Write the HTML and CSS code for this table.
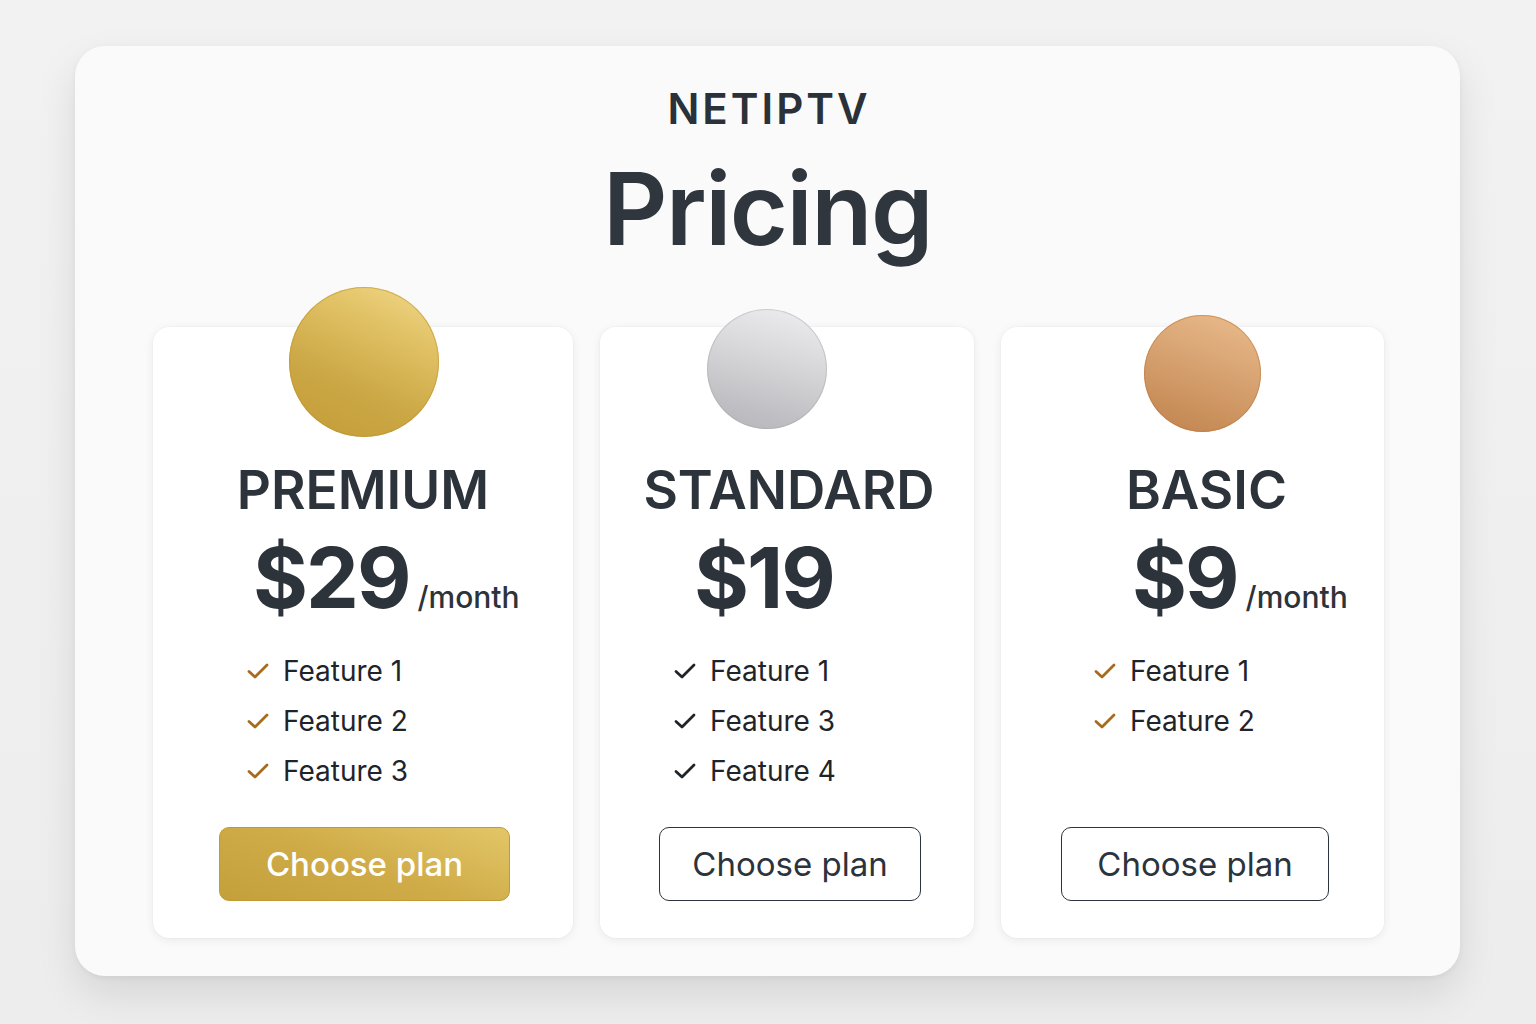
FILE: index.html
```html
<!DOCTYPE html>
<html lang="en">
<head>
<meta charset="utf-8">
<title>NETIPTV Pricing</title>
<link rel="stylesheet" href="styles.css">
</head>
<body>
<main class="panel">
  <header class="head">
    <div class="brand">NETIPTV</div>
    <h1 class="title">Pricing</h1>
  </header>
  <section class="plans">
    <article class="card card--gold">
      <div class="medal-area"><div class="medal"></div></div>
      <h2 class="plan-name">PREMIUM</h2>
      <div class="price"><span class="amount">$29</span><span class="per">/month</span></div>
      <ul class="features">
        <li><svg class="check" viewBox="0 0 22 16"><path d="M2 8.5 L8 14 L20 2"/></svg>Feature 1</li>
        <li><svg class="check" viewBox="0 0 22 16"><path d="M2 8.5 L8 14 L20 2"/></svg>Feature 2</li>
        <li><svg class="check" viewBox="0 0 22 16"><path d="M2 8.5 L8 14 L20 2"/></svg>Feature 3</li>
      </ul>
      <button class="btn btn--gold">Choose plan</button>
    </article>
    <article class="card card--silver">
      <div class="medal-area"><div class="medal"></div></div>
      <h2 class="plan-name">STANDARD</h2>
      <div class="price"><span class="amount">$19</span></div>
      <ul class="features">
        <li><svg class="check" viewBox="0 0 22 16"><path d="M2 8.5 L8 14 L20 2"/></svg>Feature 1</li>
        <li><svg class="check" viewBox="0 0 22 16"><path d="M2 8.5 L8 14 L20 2"/></svg>Feature 3</li>
        <li><svg class="check" viewBox="0 0 22 16"><path d="M2 8.5 L8 14 L20 2"/></svg>Feature 4</li>
      </ul>
      <button class="btn btn--outline">Choose plan</button>
    </article>
    <article class="card card--bronze">
      <div class="medal-area"><div class="medal"></div></div>
      <h2 class="plan-name">BASIC</h2>
      <div class="price"><span class="amount">$9</span><span class="per">/month</span></div>
      <ul class="features">
        <li><svg class="check" viewBox="0 0 22 16"><path d="M2 8.5 L8 14 L20 2"/></svg>Feature 1</li>
        <li><svg class="check" viewBox="0 0 22 16"><path d="M2 8.5 L8 14 L20 2"/></svg>Feature 2</li>
      </ul>
      <button class="btn btn--outline">Choose plan</button>
    </article>
  </section>
</main>
</body>
</html>
```
FILE: styles.css
```css
* { box-sizing: border-box; }
html, body { margin: 0; padding: 0; }
body {
  width: 1536px;
  height: 1024px;
  overflow: hidden;
  background: linear-gradient(180deg, #f2f2f2 0%, #ededed 100%);
  font-family: Inter, "Noto Sans", "Liberation Sans", sans-serif;
  color: #2e343b;
  padding: 46px 0 0 75px;
}
.panel {
  width: 1385px;
  height: 930px;
  background: #fafafa;
  border-radius: 30px;
  box-shadow: 0 18px 40px rgba(0,0,0,0.10), 0 2px 6px rgba(0,0,0,0.05);
  padding-top: 35px;
}
.head { text-align: center; }
.brand {
  font-size: 42px;
  line-height: 56px;
  font-weight: 600;
  letter-spacing: 3px;
  padding-left: 3px;
  color: #2b3138;
}
.title {
  margin: 17px 0 0;
  font-size: 100px;
  line-height: 110px;
  font-weight: 600;
  letter-spacing: -1.5px;
  color: #30363d;
}
.plans {
  display: grid;
  grid-template-columns: 420px 374px 383px;
  column-gap: 27px;
  padding-left: 78px;
  margin-top: 63px;
  height: 611px;
}
.card {
  background: #ffffff;
  border-radius: 16px;
  box-shadow: 0 2px 10px rgba(0,0,0,0.07), 0 0 0 1px rgba(0,0,0,0.015);
  display: flex;
  flex-direction: column;
  padding-bottom: 37px;
}
.card--gold {
  --medal: 150px; --medal-top: 0px; --medal-x: 1px;
  --name-shift: 0px; --price-x: 100px; --feat-x: 94px;
  --btn-w: 291px; --btn-x: 66px;
  --check: #a86a1c;
}
.card--silver {
  --medal: 120px; --medal-top: 22px; --medal-x: -20px;
  --name-shift: 2px; --price-x: 94px; --feat-x: 74px;
  --btn-w: 262px; --btn-x: 59px;
  --check: #1f2429;
}
.card--bronze {
  --medal: 117px; --medal-top: 28px; --medal-x: 10px;
  --name-shift: 14px; --price-x: 131px; --feat-x: 93px;
  --btn-w: 268px; --btn-x: 60px;
  --check: #a86a1c;
}
.medal-area {
  margin-top: -40px;
  height: 171px;
}
.medal {
  width: var(--medal);
  height: var(--medal);
  border-radius: 50%;
  margin-top: var(--medal-top);
  margin-left: calc(50% - var(--medal) / 2 + var(--medal-x));
}
.card--gold .medal {
  background: linear-gradient(205deg, #f3d98c 0%, #e0c164 30%, #cba745 65%, #c39c37 100%);
  box-shadow: inset 0 0 0 1px rgba(190,145,40,0.55);
}
.card--silver .medal {
  background: linear-gradient(195deg, #efeff1 0%, #d8d8db 40%, #bfbfc3 80%, #b6b6ba 100%);
  box-shadow: inset 0 0 0 1px rgba(160,160,165,0.4);
}
.card--bronze .medal {
  background: linear-gradient(200deg, #ebbd8d 0%, #d9a574 40%, #c68b56 85%, #c0834e 100%);
  box-shadow: inset 0 0 0 1px rgba(190,120,60,0.55);
}
.plan-name {
  margin: 0;
  text-align: center;
  font-size: 53px;
  line-height: 64px;
  font-weight: 600;
  letter-spacing: 0;
  padding-left: calc(var(--name-shift) * 2);
  color: #2d333a;
}
.price {
  margin-top: 11px;
  padding-left: var(--price-x);
  display: flex;
  align-items: baseline;
  height: 90px;
  line-height: 90px;
}
.amount {
  font-size: 84px;
  font-weight: 700;
  letter-spacing: -2px;
  color: #2d333a;
}
.per {
  font-size: 30px;
  line-height: 1;
  font-weight: 500;
  margin-left: 8px;
  color: #2d333a;
}
.features {
  list-style: none;
  margin: 23px 0 0;
  padding: 0 0 0 var(--feat-x);
}
.features li {
  display: flex;
  align-items: center;
  font-size: 28px;
  line-height: 50px;
  font-weight: 400;
  color: #1f242a;
}
.check {
  width: 22px;
  height: 16px;
  margin-right: 14px;
  fill: none;
  stroke: var(--check);
  stroke-width: 2.8;
  stroke-linecap: round;
  stroke-linejoin: round;
}
.btn {
  margin: auto 0 0 var(--btn-x);
  width: var(--btn-w);
  height: 74px;
  border-radius: 10px;
  font-family: inherit;
  font-size: 33px;
  font-weight: 500;
  cursor: pointer;
}
.btn--gold {
  color: #ffffff;
  background: linear-gradient(20deg, #c4a03b 0%, #cfac48 50%, #e3c668 100%);
  border: 1px solid #bf9a36;
}
.btn--outline {
  color: #2b333c;
  background: #ffffff;
  border: 1.5px solid #2b333c;
  font-weight: 400;
}
```
